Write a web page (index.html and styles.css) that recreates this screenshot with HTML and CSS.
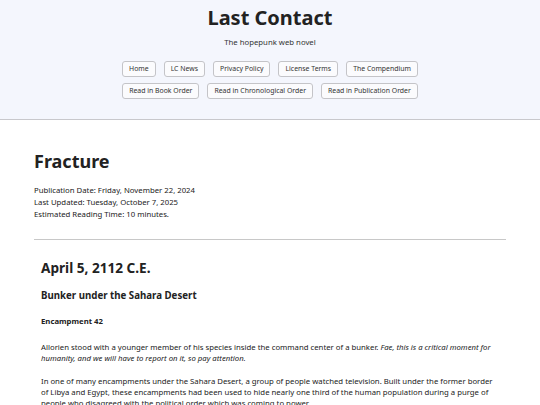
FILE: index.html
```html
<!DOCTYPE html>
<html lang="en">

<head>
  <meta charset="UTF-8">
  <meta name="viewport" content="width=device-width, initial-scale=1.0">
  <title>Fracture - Last Contact</title>
  <link rel="stylesheet" href="styles.css">
</head>

<body>
  <header class="site-header">
    <h1 class="site-title">Last Contact</h1>
    <p class="site-tagline">The hopepunk web novel</p>
    <nav class="site-nav">
      <div class="nav-row">
        <a class="nav-button" href="#">Home</a>
        <a class="nav-button" href="#">LC News</a>
        <a class="nav-button" href="#">Privacy Policy</a>
        <a class="nav-button" href="#">License Terms</a>
        <a class="nav-button" href="#">The Compendium</a>
      </div>
      <div class="nav-row">
        <a class="nav-button" href="#">Read in Book Order</a>
        <a class="nav-button" href="#">Read in Chronological Order</a>
        <a class="nav-button" href="#">Read in Publication Order</a>
      </div>
    </nav>
  </header>

  <main class="chapter">
    <h2 class="chapter-title">Fracture</h2>
    <div class="chapter-meta">
      <p>Publication Date: Friday, November 22, 2024</p>
      <p>Last Updated: Tuesday, October 7, 2025</p>
      <p>Estimated Reading Time: 10 minutes.</p>
    </div>
    <hr class="divider">

    <article class="chapter-body">
      <h3 class="scene-date">April 5, 2112 C.E.</h3>
      <h4 class="scene-place">Bunker under the Sahara Desert</h4>
      <h5 class="scene-sub">Encampment 42</h5>
      <p>Allorien stood with a younger member of his species inside the command center of a bunker. <em>Fae, this is a critical moment for humanity, and we will have to report on it, so pay attention.</em></p>
      <p>In one of many encampments under the Sahara Desert, a group of people watched television. Built under the former border of Libya and Egypt, these encampments had been used to hide nearly one third of the human population during a purge of people who disagreed with the political order which was coming to power.</p>
    </article>
  </main>
</body>

</html>
```

FILE: styles.css
```css
body {
  margin: 0;
  font-family: "Noto Sans", sans-serif;
  color: #222;
  background: #ffffff;
}

.site-header {
  background-color: #f4f6fd;
  border-bottom: 1px solid #c8c8cc;
  text-align: center;
  padding: 4px 0 20px;
}

.site-title {
  margin: 0;
  font-size: 20px;
  line-height: 28px;
  font-weight: 700;
}

.site-tagline {
  margin: 5px 0 0;
  font-size: 7.75px;
  line-height: 10px;
  color: #333;
}

.site-nav {
  margin-top: 14px;
  display: flex;
  flex-direction: column;
  align-items: center;
  gap: 6px;
}

.nav-row {
  display: flex;
  justify-content: center;
  gap: 8px;
}

.nav-button {
  display: inline-block;
  padding: 0 6px;
  height: 14px;
  line-height: 14px;
  font-size: 6.9px;
  color: #333;
  text-decoration: none;
  background: #fbfbfd;
  border: 1px solid #c4c4c8;
  border-radius: 3px;
}

.chapter {
  padding: 0 34px;
}

.chapter-title {
  margin: 28px 0 0;
  font-size: 18px;
  line-height: 26px;
  font-weight: 700;
}

.chapter-meta {
  margin-top: 10px;
  font-size: 7.75px;
  line-height: 12px;
}

.chapter-meta p {
  margin: 0;
}

.divider {
  margin: 19px 0 0;
  border: none;
  border-top: 1px solid #c8c8c8;
}

.chapter-body {
  padding: 0 7px;
  font-size: 7.75px;
  line-height: 11px;
}

.scene-date {
  margin: 19px 0 0;
  font-size: 13.6px;
  line-height: 18px;
}

.scene-place {
  margin: 12px 0 0;
  font-size: 9.7px;
  line-height: 14px;
}

.scene-sub {
  margin: 12px 0 0;
  font-size: 7.75px;
  line-height: 12px;
}

.chapter-body p {
  margin: 12px 0 0;
}

.chapter-body .scene-sub + p {
  margin-top: 15px;
}
```
